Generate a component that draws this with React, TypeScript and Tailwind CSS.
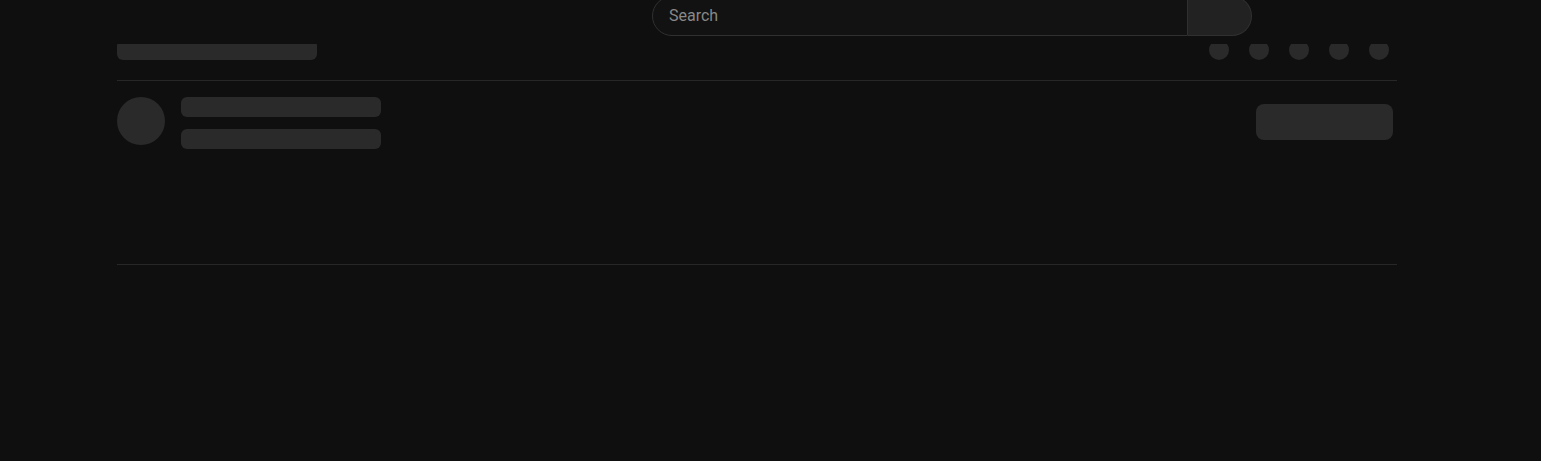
import React from "react";

export default function App() {
  return (
    <div className="w-[1541px] h-[461px] bg-[#0f0f0f] overflow-hidden" style={{ fontFamily: "Roboto, 'Liberation Sans', sans-serif" }}>
      <header className="relative z-10 flow-root h-[44px] pl-[652px]">
        <div className="-mt-1 flex h-[40px] w-[600px]">
          <div className="flex flex-1 items-center rounded-l-full border border-[#303030] bg-[#121212] pl-4">
            <span className="text-base text-[#888888]">Search</span>
          </div>
          <div className="w-[64px] rounded-r-full border border-l-0 border-[#303030] bg-[#222222]" />
        </div>
      </header>
      <main className="pl-[117px]">
        <div className="w-[1280px]">
          <div className="overflow-hidden border-b border-[#272727]">
            <div className="-mt-1 flex items-center justify-between pb-5 pr-2">
              <div className="h-5 w-[200px] rounded-md bg-[#2a2a2a]" />
              <div className="flex gap-5">
                <div className="h-5 w-5 rounded-full bg-[#2a2a2a]" />
                <div className="h-5 w-5 rounded-full bg-[#2a2a2a]" />
                <div className="h-5 w-5 rounded-full bg-[#2a2a2a]" />
                <div className="h-5 w-5 rounded-full bg-[#2a2a2a]" />
                <div className="h-5 w-5 rounded-full bg-[#2a2a2a]" />
              </div>
            </div>
          </div>
          <div className="flex h-[184px] items-start justify-between border-b border-[#272727] pt-4 pr-1">
            <div className="flex gap-4">
              <div className="h-12 w-12 rounded-full bg-[#2a2a2a]" />
              <div className="flex flex-col gap-3">
                <div className="h-5 w-[200px] rounded-md bg-[#2a2a2a]" />
                <div className="h-5 w-[200px] rounded-md bg-[#2a2a2a]" />
              </div>
            </div>
            <div className="mt-[7px] h-9 w-[137px] rounded-lg bg-[#2a2a2a]" />
          </div>
        </div>
      </main>
    </div>
  );
}
